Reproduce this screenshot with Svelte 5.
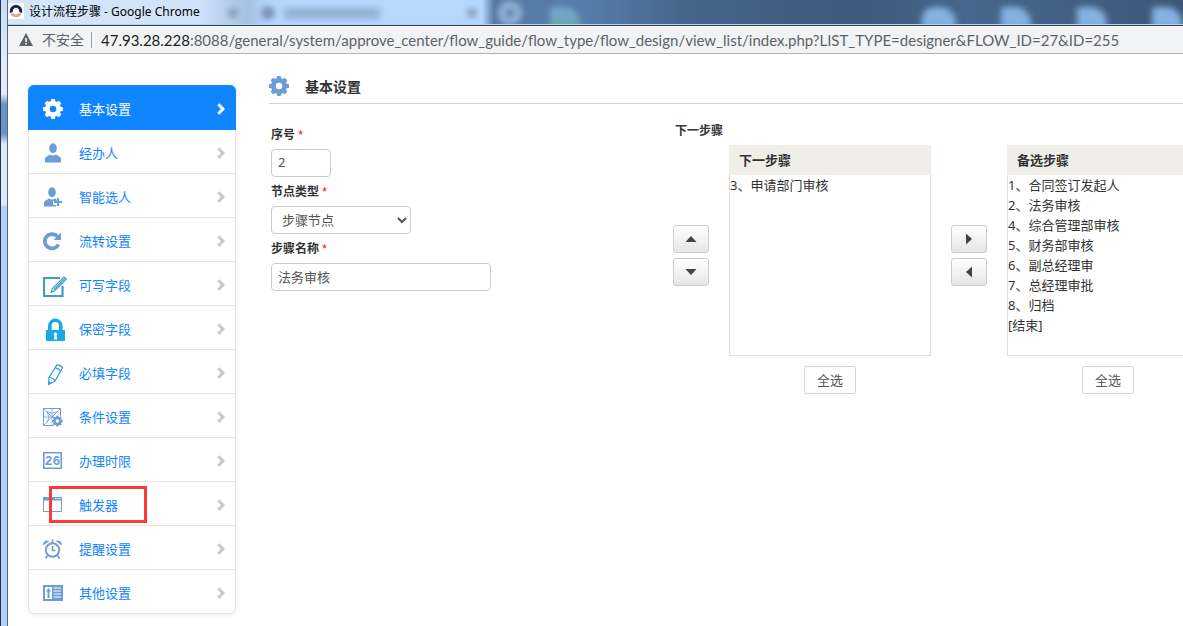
<script>
	let active = $state('basic');
	let stepNo = $state('2');
	let nodeType = $state('step');
	let stepName = $state('法务审核');
	let nextSelected = $state([]);
	let otherSelected = $state([]);

	const menu = [
		{ id: 'basic', label: '基本设置' },
		{ id: 'user', label: '经办人' },
		{ id: 'smart', label: '智能选人' },
		{ id: 'flow', label: '流转设置' },
		{ id: 'write', label: '可写字段' },
		{ id: 'secret', label: '保密字段' },
		{ id: 'required', label: '必填字段' },
		{ id: 'condition', label: '条件设置' },
		{ id: 'limit', label: '办理时限' },
		{ id: 'trigger', label: '触发器', marked: true },
		{ id: 'remind', label: '提醒设置' },
		{ id: 'other', label: '其他设置' }
	];

	let nextSteps = $state([{ id: 3, name: '3、申请部门审核' }]);
	let otherSteps = $state([
		{ id: 1, name: '1、合同签订发起人' },
		{ id: 2, name: '2、法务审核' },
		{ id: 4, name: '4、综合管理部审核' },
		{ id: 5, name: '5、财务部审核' },
		{ id: 6, name: '6、副总经理审' },
		{ id: 7, name: '7、总经理审批' },
		{ id: 8, name: '8、归档' },
		{ id: 0, name: '[结束]' }
	]);

	function move(offset) {
		const index = nextSteps.findIndex((s) => s.id === nextSelected[0]);
		const target = index + offset;
		if (index < 0 || target < 0 || target >= nextSteps.length) return;
		const list = [...nextSteps];
		[list[index], list[target]] = [list[target], list[index]];
		nextSteps = list;
	}

	function addSteps() {
		nextSteps = [...nextSteps, ...otherSteps.filter((s) => otherSelected.includes(s.id))];
		otherSteps = otherSteps.filter((s) => !otherSelected.includes(s.id));
		otherSelected = [];
	}

	function removeSteps() {
		otherSteps = [...otherSteps, ...nextSteps.filter((s) => nextSelected.includes(s.id))];
		nextSteps = nextSteps.filter((s) => !nextSelected.includes(s.id));
		nextSelected = [];
	}
</script>

{#snippet gear()}
	<circle cx="10" cy="12" r="5.6" fill="none" stroke="currentColor" stroke-width="4.6" />
	{#each [0, 45, 90, 135, 180, 225, 270, 315] as angle}
		<path d="M7.400 5.500 8.300 2h3.400l.9 3.500z" fill="currentColor" transform="rotate({angle} 10 12)" />
	{/each}
{/snippet}

{#snippet icon(id)}
	<svg class="icon" viewBox="0 0 24 24" width="24" height="24" fill="currentColor" aria-hidden="true">
		{#if id === 'basic'}
			{@render gear()}
		{:else if id === 'user'}
			<ellipse cx="10" cy="7.2" rx="3.8" ry="5" />
			<path d="M2 21.500v-3.500c0-2.500 3-3.200 5-4.600 1.500 1.500 4.500 1.500 6 0 2 1.400 5 2.100 5 4.600v3.500z" />
		{:else if id === 'smart'}
			<ellipse cx="9" cy="7.200" rx="3.800" ry="5" />
			<path d="M1 21.500v-3.500c0-2.500 3-3.200 5-4.600 1.500 1.500 4.500 1.500 6 0l1.500.9v1.700H10v4h3v1.500z" />
			<path d="M14 13h2v3h3v2h-3v3h-2v-3h-3v-2h3z" />
		{:else if id === 'flow'}
			<path d="M15.500 15.500A7.200 7.200 0 1 1 14.500 7.500" fill="none" stroke="currentColor" stroke-width="3.800" />
			<path d="M18 3.500V11h-7.500z" />
		{:else if id === 'write'}
			<g class="teal">
				<path d="M19.500 13v10H1V5h16" fill="none" stroke="currentColor" stroke-width="2.200" />
				<path d="M9.500 15.500 21 4l2.500 2L12 17.500l-4 1.800z" fill="#fff" stroke="currentColor" stroke-width="1.200" />
				<path d="M11 16.500 22 5.300" stroke="currentColor" stroke-width="1.200" />
			</g>
		{:else if id === 'secret'}
			<g class="sky">
				<path d="M6.800 14V8.800a5.500 5.500 0 0 1 11 0V14" fill="none" stroke="currentColor" stroke-width="3.600" />
				<path d="M3 13h19v11H3z" />
				<path d="M12.500 15.500a1.700 1.700 0 0 1 1 3.100l.7 3.900h-3.400l.7-3.900a1.700 1.700 0 0 1 1-3.100z" fill="#fff" />
			</g>
		{:else if id === 'required'}
			<g class="cyan" fill="none" stroke="currentColor" stroke-width="1.200" stroke-linejoin="round">
				<path d="M13.500 4.500c1-1.500 6.500.8 5.800 2.800L12 20l-6.300 3.500.3-7z" />
				<path d="M12.300 6.800c2 .2 4.200 1.300 5.200 3.300M6 16.500c2.500.2 5 1.600 6 3.500M5.500 21l2.300 1.300" />
			</g>
		{:else if id === 'condition'}
			<path d="M.5 3.500h17v17H.5z" fill="none" stroke="currentColor" />
			<path d="M.5 3.500l17 17M17.500 3.500l-17 17M9 4v16M1 12h16M3 6.500l6 1.500 6-1.500M4 17.500l2-5.500-2-5" fill="none" stroke="currentColor" stroke-width=".8" />
			<circle cx="14.500" cy="16" r="6" fill="#fff" />
			<g transform="translate(9 9.500) scale(.54)">{@render gear()}</g>
		{:else if id === 'limit'}
			<path d="M.8 3.800h17.400v15.400H.8z" fill="none" stroke="currentColor" stroke-width="1.600" />
			<text x="9.500" y="16" text-anchor="middle" class="digits">26</text>
		{:else if id === 'trigger'}
			<path d="M.5 4.500h18v14H.5z" fill="none" stroke="currentColor" />
			<path d="M0 4h19v3.500H0z" />
			<path d="M12 5.500h1.300M14.300 5.500h1.300M16.600 5.500h1.300" stroke="#fff" />
		{:else if id === 'remind'}
			<circle cx="9.500" cy="13" r="6.700" fill="none" stroke="currentColor" stroke-width="1.900" />
			<path d="M9.500 9v4.500H12.500M9.500 2.500V6M4.500 18.500l-2 3M14.500 18.500l2 3" fill="none" stroke="currentColor" stroke-width="1.600" />
			<path d="M0 8.500C0 4 3.500 2.500 6.500 4zM19 8.500c0-4.500-3.500-6-6.500-4.500z" />
		{:else}
			<path d="M0 4h20v16H0z" />
			<path d="M2 6h7v12H2zM10.500 6.500H18v1h-7.500zM10.500 9.500H18v1h-7.500zM10.500 12.500H18v1h-7.500zM10.500 15.500H18v1h-7.500z" fill="#fff" />
			<path d="M5.500 7 8 10.500H6.500V17h-2v-6.500H3z" />
		{/if}
	</svg>
{/snippet}

<div class="desktop">
	<div class="frame-edge"></div>
	<div class="window">
		<header class="titlebar">
			<div class="backdrop" aria-hidden="true">
				<i class="ghost cross first"></i>
				<i class="ghost tab-icon"></i>
				<i class="ghost tab-text"></i>
				<i class="ghost cross second"></i>
				<i class="ghost plus"></i>
				<i class="ghost tile green"></i>
				<i class="ghost tile a"></i>
				<i class="ghost tile b"></i>
				<i class="ghost tile c"></i>
				<i class="ghost tile d"></i>
			</div>
			<svg class="favicon" viewBox="0 0 16 16" width="16" height="16" aria-hidden="true">
				<path d="M0 0h16v16H0z" fill="#fff" />
				<path d="M3.400 9.500a4.800 4.800 0 1 1 9.200 0" fill="none" stroke="#1c2558" stroke-width="3" />
				<path d="M3.500 10.500a5 4 0 0 0 9 0" fill="none" stroke="#d3ad8d" stroke-width="2.500" />
			</svg>
			<span class="title">设计流程步骤 - Google Chrome</span>
		</header>
		<div class="address">
			<svg viewBox="0 0 14 13" width="14" height="13" aria-hidden="true">
				<path d="M7 0l7 13H0z" fill="#5f6368" />
				<path d="M6.300 5h1.500v4H6.300zM6.300 10h1.500v1.500H6.300z" fill="#fff" />
			</svg>
			<span class="insecure">不安全</span>
			<span class="url"><b>47.93.28.228</b>:8088/general/system/approve_center/flow_guide/flow_type/flow_design/view_list/index.php?LIST_TYPE=designer&amp;FLOW_ID=27&amp;ID=255</span>
		</div>

		<div class="page">
			<nav class="sidebar">
				{#each menu as item (item.id)}
					<a
						href="#{item.id}"
						class="item"
						class:active={active === item.id}
						onclick={() => (active = item.id)}
					>
						{@render icon(item.id)}
						<span class="name">{item.label}</span>
						<svg class="chevron" viewBox="0 0 8 12" width="8" height="12" aria-hidden="true">
							<path d="M1.300 1.300 6 6l-4.700 4.700" fill="none" stroke="currentColor" stroke-width="3" />
						</svg>
						{#if item.marked}<span class="mark"></span>{/if}
					</a>
				{/each}
			</nav>

			<main>
				<h1>
					<svg viewBox="0 2 20 20" width="20" height="20" aria-hidden="true">{@render gear()}</svg>
					基本设置
				</h1>
				<div class="columns">
					<form class="fields">
						<label for="no">序号 <em>*</em></label>
						<input id="no" class="short" type="text" bind:value={stepNo} />
						<label for="type">节点类型 <em>*</em></label>
						<select id="type" bind:value={nodeType}>
							<option value="step">步骤节点</option>
							<option value="child">子流程节点</option>
						</select>
						<label for="name">步骤名称 <em>*</em></label>
						<input id="name" type="text" bind:value={stepName} />
					</form>

					<section class="next">
						<h2>下一步骤</h2>
						<div class="transfer">
							<div class="arrows">
								<button type="button" aria-label="上移" onclick={() => move(-1)}>
									<svg viewBox="0 0 12 6" width="12" height="6"><path d="M6 0l5.500 6H.5z" /></svg>
								</button>
								<button type="button" aria-label="下移" onclick={() => move(1)}>
									<svg viewBox="0 0 12 6" width="12" height="6"><path d="M.5 0h11L6 6z" /></svg>
								</button>
							</div>
							<div class="list">
								<label for="nextList">下一步骤</label>
								<select id="nextList" multiple bind:value={nextSelected}>
									{#each nextSteps as step (step.id)}
										<option value={step.id}>{step.name}</option>
									{/each}
								</select>
								<button type="button" class="all" onclick={() => (nextSelected = nextSteps.map((s) => s.id))}>全选</button>
							</div>
							<div class="arrows">
								<button type="button" aria-label="移出" onclick={removeSteps}>
									<svg viewBox="0 0 6 12" width="6" height="12"><path d="M0 .5L6 6l-6 5.500z" /></svg>
								</button>
								<button type="button" aria-label="移入" onclick={addSteps}>
									<svg viewBox="0 0 6 12" width="6" height="12"><path d="M6 .5v11L0 6z" /></svg>
								</button>
							</div>
							<div class="list">
								<label for="otherList">备选步骤</label>
								<select id="otherList" multiple bind:value={otherSelected}>
									{#each otherSteps as step (step.id)}
										<option value={step.id}>{step.name}</option>
									{/each}
								</select>
								<button type="button" class="all" onclick={() => (otherSelected = otherSteps.map((s) => s.id))}>全选</button>
							</div>
						</div>
					</section>
				</div>
			</main>
		</div>
	</div>
</div>

<style>
	:global(body) {
		margin: 0;
		background: #fff;
	}

	.desktop {
		display: flex;
		min-height: 100vh;
		overflow: hidden;
		font-family: 'Noto Sans', 'Noto Sans CJK SC', sans-serif;
		font-size: 13px;
		color: #333;
	}

	input,
	select,
	button {
		box-sizing: border-box;
		margin: 0;
		font-family: inherit;
		font-size: 13px;
	}

	.frame-edge {
		box-sizing: border-box;
		flex: 0 0 8px;
		border-left: 1px solid #27364c;
		border-right: 1px solid #52657f;
		background: linear-gradient(#c5dcf6 0, #dfebfa 60px, #dfebfa 94px, #6e94c3 104px, #6e94c3 134px, #dce9f9 144px, #dce9f9 205px, #b1d0f5 207px);
	}

	.window {
		flex: 1;
		min-width: 0;
	}

	.titlebar {
		position: relative;
		display: flex;
		align-items: center;
		gap: 5px;
		height: 22px;
		padding-bottom: 2px;
		border-bottom: 1px solid #b9cde0;
		overflow: hidden;
		color: #000;
	}

	.backdrop {
		position: absolute;
		inset: 0;
		background:
			linear-gradient(90deg, #d4e6fa 0, #cfe3fa 190px, #a4c1e2 240px, #b6d8ff 260px, #b6d8ff 474px, transparent 486px),
			linear-gradient(90deg, #567aa4 490px, #567da9 580px, #45658b 680px, #3d5a7c 850px, #46678f 960px, #3c5878);
	}

	.ghost {
		position: absolute;
		filter: blur(3px);
	}

	.cross {
		top: 9px;
		width: 8px;
		height: 8px;
		background: #7d93ad;
	}

	.first {
		left: 221px;
	}

	.second {
		left: 460px;
	}

	.tab-icon {
		top: 6px;
		left: 253px;
		width: 14px;
		height: 14px;
		border-radius: 7px;
		background: #7890b8;
	}

	.tab-text {
		top: 8px;
		left: 276px;
		width: 96px;
		height: 11px;
		background: #93b0d3;
	}

	.plus {
		top: 1px;
		left: 490px;
		width: 8px;
		height: 8px;
		border: 8px solid #95b4da;
		border-radius: 12px;
		background: #56779e;
	}

	.tile {
		top: 7px;
		width: 30px;
		height: 22px;
		border-radius: 2px 16px 0 0;
		background: #86b1e2;
	}

	.green {
		left: 542px;
		background: linear-gradient(#78a8d6, #6aa5a6);
	}

	.a {
		left: 914px;
		width: 34px;
		border-radius: 12px 16px 0 0;
	}

	.b {
		left: 993px;
	}

	.c {
		left: 1069px;
	}

	.d {
		left: 1144px;
	}

	.favicon,
	.title {
		position: relative;
	}

	.title {
		font-size: 12px;
	}

	.address {
		display: flex;
		align-items: center;
		height: 27px;
		padding-left: 11px;
		border-top: 1px solid #32404f;
		border-bottom: 1px solid #b0b3b6;
		background: #f1f3f4;
		color: #5f6368;
		white-space: nowrap;
	}

	.insecure {
		margin-left: 9px;
		padding-right: 7px;
		border-right: 1px solid #9b9ea2;
		font-size: 14px;
		line-height: 16px;
	}

	.url {
		margin-left: 9px;
		font-family: Lato, 'Noto Sans', sans-serif;
		font-size: 15px;
	}

	.url b {
		font-weight: normal;
		color: #202124;
	}

	.page {
		display: flex;
		align-items: flex-start;
		gap: 33px;
		padding: 15px 0 0 20px;
	}

	.sidebar {
		box-sizing: border-box;
		flex: 0 0 208px;
		margin-top: 16px;
		border-radius: 6px;
		box-shadow: 0 1px 4px rgba(0, 0, 0, 0.08);
	}

	.item {
		box-sizing: border-box;
		position: relative;
		display: flex;
		align-items: center;
		height: 44px;
		padding: 11px 10px 8px 14px;
		border: 1px solid #e5e5e5;
		border-top: 0;
		color: #0f85ff;
		line-height: 24px;
		text-decoration: none;
	}

	.item:first-child {
		height: 45px;
		padding-top: 12px;
		border-radius: 6px 6px 0 0;
	}

	.item:last-child {
		border-radius: 0 0 6px 6px;
	}

	.item.active {
		border-color: #0f85ff;
		background: #0f85ff;
		color: #fff;
	}

	.icon {
		margin-right: 12px;
		color: #6d9dd6;
	}

	.active .icon {
		color: #fff;
	}

	.teal {
		color: #3f9ccb;
	}

	.sky {
		color: #1ba9e5;
	}

	.cyan {
		color: #2598d0;
	}

	.digits {
		font-family: 'Liberation Mono', monospace;
		font-size: 13px;
		font-weight: bold;
	}

	.name {
		flex: 1;
	}

	.chevron {
		color: #c8c8c8;
	}

	.active .chevron {
		color: #fff;
	}

	.mark {
		box-sizing: border-box;
		position: absolute;
		top: 4px;
		left: 20px;
		width: 98px;
		height: 37px;
		border: 3px solid #fb3a3c;
	}

	main {
		flex: 1;
		min-width: 0;
	}

	h1 {
		display: flex;
		align-items: center;
		gap: 16px;
		height: 34px;
		margin: 0;
		border-bottom: 1px solid #d4d4d4;
		font-size: 14px;
	}

	h1 svg {
		color: #6d9dd6;
	}

	.columns {
		display: flex;
		padding-top: 16px;
	}

	.fields {
		display: flex;
		flex: 0 0 402px;
		flex-direction: column;
		align-items: flex-start;
		padding-left: 2px;
	}

	.fields label {
		font-size: 12px;
		font-weight: bold;
		line-height: 29px;
	}

	.fields em {
		color: #f00;
		font-family: 'Liberation Sans', sans-serif;
		font-style: normal;
		font-weight: normal;
		line-height: 12px;
	}

	.fields input,
	.fields select {
		width: 220px;
		height: 28px;
		padding: 0 6px 2px;
		border: 1px solid #ccc;
		border-radius: 4px;
		background: #fff;
		color: #555;
	}

	.fields .short {
		width: 60px;
	}

	.fields select {
		width: 140px;
		padding: 0 0 0 6px;
	}

	h2 {
		margin: 0 0 3px;
		padding-left: 2px;
		font-size: 12px;
		line-height: 22px;
	}

	.transfer {
		display: flex;
		gap: 20px;
	}

	.arrows {
		display: flex;
		flex: 0 0 36px;
		flex-direction: column;
		gap: 5px;
		padding-top: 80px;
	}

	.arrows button {
		display: flex;
		align-items: center;
		justify-content: center;
		height: 28px;
		padding: 0;
		border: 1px solid #ccc;
		border-radius: 3px;
		background: linear-gradient(#fff, #e6e6e6);
	}

	.arrows svg {
		fill: #444;
	}

	.list {
		display: flex;
		flex: 0 0 202px;
		flex-direction: column;
	}

	.list label {
		padding-left: 10px;
		background: #f0efe7;
		font-weight: bold;
		line-height: 30px;
	}

	.list select {
		height: 181px;
		padding: 0;
		border: 1px solid #ddd;
		border-top: 0;
		border-radius: 0;
		outline: 0;
		background: #fff;
		color: #333;
	}

	.list option {
		height: 20px;
		min-height: 20px;
		padding: 0;
		line-height: 20px;
	}

	.all {
		align-self: center;
		width: 52px;
		height: 28px;
		margin-top: 10px;
		padding: 0 0 2px;
		border: 1px solid #d4d4d4;
		border-radius: 2px;
		background: #fff;
		color: #555;
	}
</style>
